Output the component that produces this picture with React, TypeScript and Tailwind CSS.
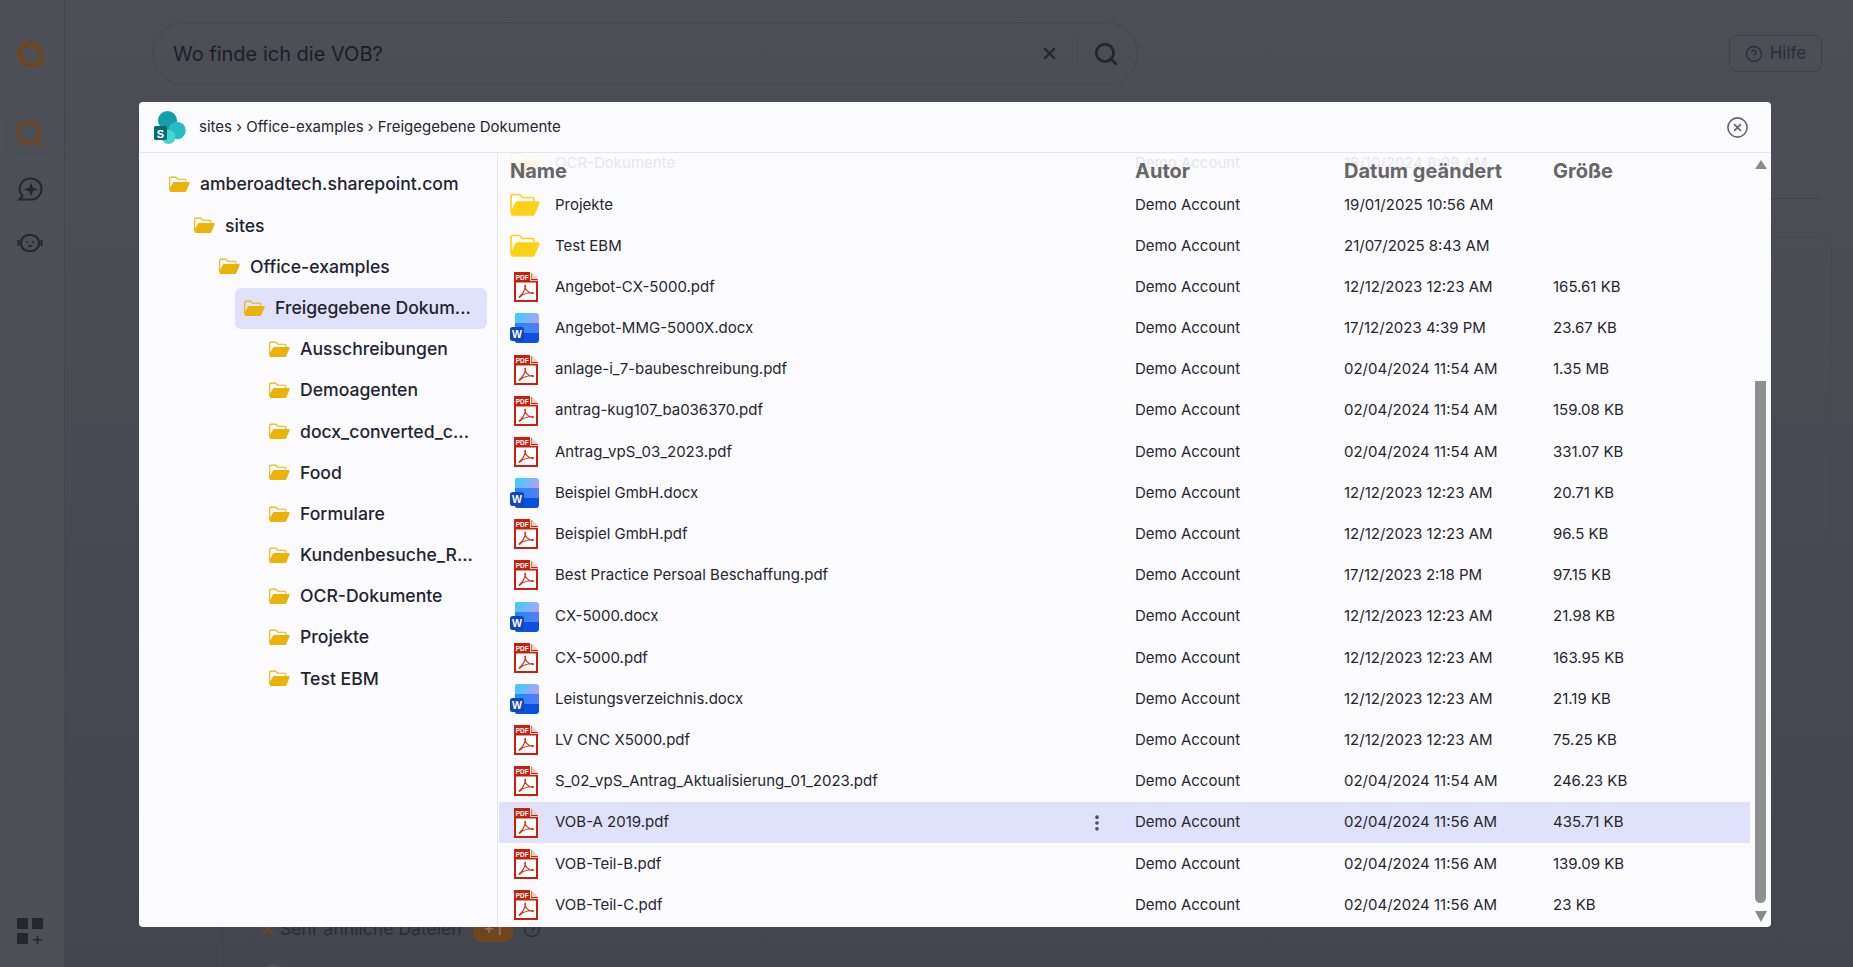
import React from 'react'
import { Search, X, CircleHelp, CircleX, EllipsisVertical } from 'lucide-react'

type FileRow = { name: string; type: 'folder' | 'pdf' | 'word'; date: string; size: string }

const files: FileRow[] = [
    { name: 'Projekte', type: 'folder', date: '19/01/2025 10:56 AM', size: '' },
    { name: 'Test EBM', type: 'folder', date: '21/07/2025 8:43 AM', size: '' },
    { name: 'Angebot-CX-5000.pdf', type: 'pdf', date: '12/12/2023 12:23 AM', size: '165.61 KB' },
    { name: 'Angebot-MMG-5000X.docx', type: 'word', date: '17/12/2023 4:39 PM', size: '23.67 KB' },
    { name: 'anlage-i_7-baubeschreibung.pdf', type: 'pdf', date: '02/04/2024 11:54 AM', size: '1.35 MB' },
    { name: 'antrag-kug107_ba036370.pdf', type: 'pdf', date: '02/04/2024 11:54 AM', size: '159.08 KB' },
    { name: 'Antrag_vpS_03_2023.pdf', type: 'pdf', date: '02/04/2024 11:54 AM', size: '331.07 KB' },
    { name: 'Beispiel GmbH.docx', type: 'word', date: '12/12/2023 12:23 AM', size: '20.71 KB' },
    { name: 'Beispiel GmbH.pdf', type: 'pdf', date: '12/12/2023 12:23 AM', size: '96.5 KB' },
    { name: 'Best Practice Persoal Beschaffung.pdf', type: 'pdf', date: '17/12/2023 2:18 PM', size: '97.15 KB' },
    { name: 'CX-5000.docx', type: 'word', date: '12/12/2023 12:23 AM', size: '21.98 KB' },
    { name: 'CX-5000.pdf', type: 'pdf', date: '12/12/2023 12:23 AM', size: '163.95 KB' },
    { name: 'Leistungsverzeichnis.docx', type: 'word', date: '12/12/2023 12:23 AM', size: '21.19 KB' },
    { name: 'LV CNC X5000.pdf', type: 'pdf', date: '12/12/2023 12:23 AM', size: '75.25 KB' },
    { name: 'S_02_vpS_Antrag_Aktualisierung_01_2023.pdf', type: 'pdf', date: '02/04/2024 11:54 AM', size: '246.23 KB' },
    { name: 'VOB-A 2019.pdf', type: 'pdf', date: '02/04/2024 11:56 AM', size: '435.71 KB' },
    { name: 'VOB-Teil-B.pdf', type: 'pdf', date: '02/04/2024 11:56 AM', size: '139.09 KB' },
    { name: 'VOB-Teil-C.pdf', type: 'pdf', date: '02/04/2024 11:56 AM', size: '23 KB' },
]

const tree = [
    { name: 'amberoadtech.sharepoint.com', pad: 'pl-[30px]' },
    { name: 'sites', pad: 'pl-[55px]' },
    { name: 'Office-examples', pad: 'pl-[80px]' },
    { name: 'Freigegebene Dokum...', pad: 'pl-[96px]', active: true },
    { name: 'Ausschreibungen', pad: 'pl-[130px]' },
    { name: 'Demoagenten', pad: 'pl-[130px]' },
    { name: 'docx_converted_c...', pad: 'pl-[130px]' },
    { name: 'Food', pad: 'pl-[130px]' },
    { name: 'Formulare', pad: 'pl-[130px]' },
    { name: 'Kundenbesuche_R...', pad: 'pl-[130px]' },
    { name: 'OCR-Dokumente', pad: 'pl-[130px]' },
    { name: 'Projekte', pad: 'pl-[130px]' },
    { name: 'Test EBM', pad: 'pl-[130px]' },
]

const FolderIcon = ({ className, color }: { className: string; color: string }) => (
    <svg viewBox="0 0 30 24" className={className}>
        <path d="M1 20V3.5C1 2.4 1.9 1.5 3 1.5H9.5L12.5 4.5H22C23.1 4.5 24 5.4 24 6.5V8" fill="none" stroke={color} strokeWidth="1.6" />
        <path d="M1 22.5V18L5.5 9.5C5.9 8.7 6.6 8.3 7.4 8.3H28C29.3 8.3 30 9.4 29.4 10.5L24.8 21.2C24.4 22.1 23.6 22.7 22.6 22.7H2.4C1.6 22.7 1 22.5 1 22.5Z" fill={color} />
    </svg>
)

const PdfIcon = () => (
    <svg viewBox="0 0 24 30" className="h-[30px] w-[24px]">
        <path d="M0 0H16.5L24 7.5V30H0Z" fill="#c7210b" />
        <path d="M17.5 0.5L24 7H17.5Z" fill="#f3c9c0" />
        <path d="M17 0V8H24V8.8H16V0Z" fill="#fbfbfe" />
        <rect x="2" y="10.5" width="20" height="17.5" fill="#fff" />
        <text x="1.8" y="7.6" fontSize="6.4" fontWeight="700" fill="#fff" fontFamily="Liberation Sans, sans-serif">PDF</text>
        <path d="M5.5 24.5C8 23 10.5 18.5 11.5 14.5C11.8 13 11 12.5 10.8 14C10.6 16.5 13.5 20.5 18.5 21.5C20 21.7 19.8 20.4 18 20.5C14.5 20.7 9 22 6 25C5.2 25.8 4.8 25 5.5 24.5Z" fill="none" stroke="#d13a22" strokeWidth="1.2" />
    </svg>
)

const WordIcon = () => (
    <svg viewBox="0 0 30 30" className="h-[30px] w-[30px]">
        <defs>
            <linearGradient id="wordTop" x1="0" y1="0" x2="1" y2="0.4">
                <stop offset="0" stopColor="#2fd0ff" />
                <stop offset="1" stopColor="#a9a4fb" />
            </linearGradient>
            <linearGradient id="wordMid" x1="0" y1="0" x2="1" y2="0">
                <stop offset="0" stopColor="#1d8cf2" />
                <stop offset="1" stopColor="#5a7cf8" />
            </linearGradient>
        </defs>
        <path d="M5 2C5 0.9 5.9 0 7 0H26C27.7 0 29 1.3 29 3V11H5Z" fill="url(#wordTop)" />
        <rect x="5" y="10" width="24" height="10" fill="url(#wordMid)" />
        <path d="M5 20H29V27C29 28.7 27.7 30 26 30H7C5.9 30 5 29.1 5 28Z" fill="#0b50e0" />
        <rect x="0" y="14" width="14" height="14" rx="2.5" fill="#1546b8" />
        <text x="7" y="25" textAnchor="middle" fontSize="10.5" fontWeight="700" fill="#fff" fontFamily="Liberation Sans, sans-serif">W</text>
    </svg>
)

const SharePointLogo = () => (
    <svg viewBox="0 0 32 33" className="h-[33px] w-[32px]">
        <circle cx="13.5" cy="9.5" r="9.5" fill="#12a0a8" />
        <circle cx="23" cy="19.5" r="8.7" fill="#27bcc0" />
        <circle cx="14.5" cy="26" r="7" fill="#45d5d0" />
        <rect x="0" y="15" width="13" height="14" rx="1.5" fill="#0b6a71" />
        <text x="6.5" y="26.5" textAnchor="middle" fontSize="11" fontWeight="700" fill="#fff" fontFamily="Liberation Sans, sans-serif">S</text>
    </svg>
)

const FileIcon = ({ type }: { type: FileRow['type'] }) => {
    if (type === 'folder') return <FolderIcon className="h-[24px] w-[30px]" color="#fcd116" />
    if (type === 'pdf') return <div className="pl-[4px]"><PdfIcon /></div>
    return <WordIcon />
}

const Sidebar = () => (
    <aside className="flex w-[65px] shrink-0 flex-col items-center justify-between border-r border-[#44464e] bg-[#4d4f56] pb-[23px] pr-[4px] pt-[41px]">
        <div className="flex flex-col items-center">
            <svg viewBox="0 0 26 26" className="h-[26px] w-[26px]">
                <path d="M13 2.5C7 2.5 2.5 7 2.5 13S7 23.5 13 23.5H24V13C24 7 19 2.5 13 2.5Z" fill="none" stroke="#6f4520" strokeWidth="4.5" />
                <circle cx="9.5" cy="13" r="1" fill="#6f4520" />
                <circle cx="13" cy="13" r="1" fill="#6f4520" />
                <circle cx="16.5" cy="13" r="1" fill="#6f4520" />
            </svg>
            <div className="mt-[43px] flex h-[48px] w-[48px] items-center justify-center rounded-xl bg-[#4c4e55]">
                <Search size={32} strokeWidth={2.2} color="#6f4520" />
            </div>
            <svg viewBox="0 0 26 26" className="mt-[18px] h-[26px] w-[26px]" fill="none" stroke="#25272f" strokeWidth="2">
                <path d="M14 2.5A10.5 10.5 0 1 1 14 23.5H2.5L5.5 20A10.5 10.5 0 0 1 14 2.5Z" />
                <path d="M14 6.5L15.8 11.7L21 13.5L15.8 15.3L14 20.5L12.2 15.3L7 13.5L12.2 11.7Z" fill="#25272f" stroke="none" />
            </svg>
            <svg viewBox="0 0 26 26" className="mt-[28px] h-[26px] w-[26px]" fill="none" stroke="#25272f" strokeWidth="2.2">
                <rect x="4" y="5" width="18" height="16" rx="7.5" />
                <path d="M1.5 10V16M24.5 10V16" />
                <path d="M9 12H11M15 12H17M11 16H15" strokeWidth="1.4" />
            </svg>
        </div>
        <div className="grid grid-cols-2 gap-[4px]">
            <div className="h-[11px] w-[11px] bg-[#25272f]" />
            <div className="h-[11px] w-[11px] bg-[#25272f]" />
            <div className="h-[11px] w-[11px] bg-[#25272f]" />
            <div className="flex h-[11px] w-[11px] items-center justify-center text-[18px] leading-none text-[#25272f]">+</div>
        </div>
    </aside>
)

const Background = () => (
    <div className="flex h-screen w-full overflow-hidden bg-gradient-to-b from-[#4d4e55] to-[#43454f] font-['Inter',sans-serif]">
        <Sidebar />
        <main className="min-w-0 flex-1 pl-[87px] pr-[31px] pt-[22px]">
            <div className="flex items-start justify-between">
                <div className="flex h-[63px] w-[986px] items-center rounded-[32px] border border-[#44464e] pl-[20px] pr-[18px]">
                    <span className="flex-1 text-[20px] text-[#1c1e26]">Wo finde ich die VOB?</span>
                    <X size={19} strokeWidth={2.8} color="#25272f" />
                    <div className="ml-[18px] mr-[15px] h-[30px] w-px bg-[#44464e]" />
                    <Search size={26} strokeWidth={2.6} color="#25272f" />
                </div>
                <div className="mt-[13px] flex h-[37px] w-[93px] items-center justify-center gap-[7px] rounded-lg border border-[#3f414a] text-[17px] text-[#2b2d38]">
                    <CircleHelp size={18} strokeWidth={1.8} />
                    Hilfe
                </div>
            </div>
            <div className="mt-[113px] h-px bg-[#42444c]" />
            <div className="-mr-[10px] mt-[37px] h-[456px] rounded-2xl border border-[#46484f]" />
            <div className="ml-[70px] mt-[226px] h-[100px] border-l border-[#3f414a] pl-[35px] text-[17.6px] text-[#2b2d38]">
                <div className="flex h-[22px] items-center">
                    <X size={20} strokeWidth={2.4} color="#6f4520" />
                    <span className="ml-[2px]">Sehr ähnliche Dateien</span>
                    <span className="ml-[11px] flex h-[26px] w-[40px] items-center justify-center rounded-lg bg-[#6f4520] text-[#8d7767]">+1</span>
                    <CircleHelp className="ml-[10px]" size={18} strokeWidth={1.8} />
                </div>
                <div className="ml-[5px] mt-[24px] h-[22px] w-[22px] rounded-full border-[5px] border-[#4f5158] bg-[#0f6f78]" />
            </div>
        </main>
    </div>
)

const TreePanel = () => (
    <div className="w-[359px] shrink-0 border-r border-[#e5e5ea] pr-[10px] pt-[11px]">
        {tree.map((item) => (
            <div key={item.name} className={`${item.pad} flex h-[41.2px] items-center`}>
                <div className={`flex h-full w-full items-center gap-[10px] rounded-md ${item.active ? 'bg-[#e0e1fb] pl-[9px]' : ''}`}>
                    <FolderIcon className="h-[17px] w-[21px] shrink-0" color="#eab308" />
                    <span className="whitespace-nowrap text-[17.6px] font-medium text-[#1f2430]">{item.name}</span>
                </div>
            </div>
        ))}
    </div>
)

const Scrollbar = () => (
    <div className="flex w-[21px] shrink-0 flex-col items-center pb-[5px] pt-[7px]">
        <div className="h-0 w-0 border-x-[6.5px] border-b-[9px] border-x-transparent border-b-[#8a8a8a]" />
        <div className="mt-[212px] w-[11px] flex-1 rounded-b-full rounded-t-md bg-[#8f8f8f]" />
        <div className="mt-[8px] h-0 w-0 border-x-[6px] border-t-[11px] border-x-transparent border-t-[#8a8a8a]" />
    </div>
)

const FilePanel = () => (
    <div className="relative min-w-0 flex-1 overflow-hidden">
        {/* sticky header lies over the scrolled rows */}
        <div className="absolute left-0 right-[21px] top-0 z-10 flex h-[40px] items-start bg-[#fbfbfe]/90 pt-[3px] text-[20px] font-bold text-[#666666]">
            <span className="ml-[12px] w-[625px]">Name</span>
            <span className="w-[209px]">Autor</span>
            <span className="w-[209px]">Datum geändert</span>
            <span>Größe</span>
        </div>
        <div className="flex h-full">
            <div className="-mt-[10px] min-w-0 flex-1 pl-[1px] text-[15px] text-[#26262e]">
                <div className="flex h-[41.2px] items-center">
                    <div className="flex w-[56px] shrink-0 pl-[11px]"><FileIcon type="folder" /></div>
                    <span className="w-[580px] shrink-0">OCR-Dokumente</span>
                    <span className="w-[209px] shrink-0">Demo Account</span>
                    <span className="shrink-0">18/10/2024 8:09 AM</span>
                </div>
                {files.map((file) => {
                    const active = file.name === 'VOB-A 2019.pdf'
                    return (
                        <div key={file.name} className={`flex h-[41.2px] items-center ${active ? 'bg-[#e0e1fb]' : ''}`}>
                            <div className="flex w-[56px] shrink-0 pl-[11px]"><FileIcon type={file.type} /></div>
                            <span className="w-[532px] shrink-0 truncate">{file.name}</span>
                            <span className="flex w-[48px] shrink-0 justify-start">
                                {active && <EllipsisVertical size={20} strokeWidth={2.4} color="#4b4f5c" />}
                            </span>
                            <span className="w-[209px] shrink-0">Demo Account</span>
                            <span className="w-[209px] shrink-0">{file.date}</span>
                            <span className="shrink-0">{file.size}</span>
                        </div>
                    )
                })}
            </div>
            <Scrollbar />
        </div>
    </div>
)

export default function App() {
    return (
        <div className="relative h-screen w-full overflow-hidden">
            <Background />
            <div className="absolute inset-0 pl-[139px] pt-[102px] font-['Inter',sans-serif]">
                <div className="flex h-[825px] w-[1632px] flex-col overflow-hidden rounded-[4px] bg-[#fbfbfe]">
                    <div className="flex h-[51px] shrink-0 items-center border-b border-[#e5e5ea] pl-[15px] pr-[22px]">
                        <SharePointLogo />
                        <div className="ml-[13px] flex-1 text-[15px] text-[#26262e]">sites › Office-examples › Freigegebene Dokumente</div>
                        <CircleX size={23} strokeWidth={1.7} color="#5f6578" />
                    </div>
                    <div className="flex min-h-0 flex-1 overflow-hidden">
                        <TreePanel />
                        <FilePanel />
                    </div>
                </div>
            </div>
        </div>
    )
}
